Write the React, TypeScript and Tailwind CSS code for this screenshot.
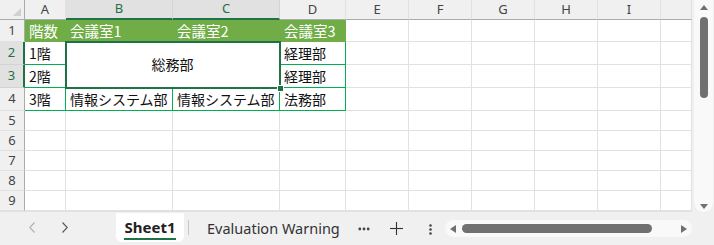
import type { ReactNode } from "react";

const ui = "font-['Noto_Sans','Liberation_Sans',sans-serif]";
const jp = "font-['Noto_Sans_CJK_JP','Noto_Sans',sans-serif]";

const letters = ["A", "B", "C", "D", "E", "F", "G", "H", "I", ""];

function Cell({ className = "", children }: { className?: string; children?: ReactNode }) {
  return (
    <div className={`box-border flex items-center overflow-hidden whitespace-nowrap border-r border-b ${className}`}>
      {children}
    </div>
  );
}

function RowHead({ n, selected = false }: { n: number; selected?: boolean }) {
  return selected ? (
    <div className={`box-border flex items-center justify-center border-b border-b-[#d4d4d4] border-r-2 border-r-[#1f7246] bg-[#e1e1e1] text-[13px] text-[#1f7246] ${ui}`}>
      {n}
    </div>
  ) : (
    <div className={`box-border flex items-center justify-center border-b border-b-[#e1e1e1] border-r border-r-[#ababab] bg-[#f0f0f0] text-[13px] text-[#444] ${ui}`}>
      {n}
    </div>
  );
}

function Grid() {
  const empty = "border-[#e1e1e1] bg-white";
  const table = `border-[#00b050] bg-white pl-[4px] text-[14px] text-[#111] ${jp}`;
  const head = `border-r-[#70ad47] border-b-[#70ad47] bg-[#70ad47] pl-[4px] text-[14.5px] text-white ${jp}`;

  return (
    <div className="grid h-[212px] w-[692px] grid-cols-[25px_41px_107px_107px_66px_63px_63px_63px_63px_63px_31px] grid-rows-[20px_22px_23px_23px_23px_20px_20px_20px_20px_20px] overflow-hidden bg-[#e1e1e1]">
      {/* column headers */}
      <div className="box-border flex items-end justify-end border-r border-b border-r-[#ababab] border-b-[#ababab] bg-[#f0f0f0] p-[3px]">
        <svg width="8" height="8" viewBox="0 0 8 8">
          <polygon points="8,0 8,8 0,8" fill="#d0d0d0" />
        </svg>
      </div>
      {letters.map((l) =>
        l === "B" || l === "C" ? (
          <div
            key={l}
            className={`box-border flex items-center justify-center border-r border-r-[#d4d4d4] border-b-2 border-b-[#1f7246] bg-[#e1e1e1] text-[13px] text-[#1f7246] ${ui}`}
          >
            {l}
          </div>
        ) : (
          <div
            key={l || "J"}
            className={`box-border flex items-center justify-center border-r border-b border-r-[#e1e1e1] border-b-[#ababab] bg-[#f0f0f0] text-[13px] text-[#444] ${ui}`}
          >
            {l}
          </div>
        ),
      )}

      {/* row 1 */}
      <RowHead n={1} />
      <Cell className={head}>階数</Cell>
      <Cell className={head}>会議室1</Cell>
      <Cell className={head}>会議室2</Cell>
      <Cell className={head}>会議室3</Cell>
      {[5, 6, 7, 8, 9, 10].map((c) => (
        <Cell key={c} className={empty} />
      ))}

      {/* row 2 */}
      <RowHead n={2} selected />
      <Cell className={table}>1階</Cell>
      <div className="relative col-span-2 row-span-2">
        <Cell className={`h-full justify-center !pl-0 ${table}`}>総務部</Cell>
        <div className="absolute -top-px -right-px -bottom-px -left-px z-10 border-2 border-[#1f7246]" />
        <div className="absolute -right-[4px] -bottom-[4px] z-20 h-[7px] w-[7px] border border-white bg-[#1f7246]" />
      </div>
      <Cell className={table}>経理部</Cell>
      {[5, 6, 7, 8, 9, 10].map((c) => (
        <Cell key={c} className={empty} />
      ))}

      {/* row 3 */}
      <RowHead n={3} selected />
      <Cell className={table}>2階</Cell>
      <Cell className={table}>経理部</Cell>
      {[5, 6, 7, 8, 9, 10].map((c) => (
        <Cell key={c} className={empty} />
      ))}

      {/* row 4 */}
      <RowHead n={4} />
      <Cell className={table}>3階</Cell>
      <Cell className={table}>情報システム部</Cell>
      <Cell className={table}>情報システム部</Cell>
      <Cell className={table}>法務部</Cell>
      {[5, 6, 7, 8, 9, 10].map((c) => (
        <Cell key={c} className={empty} />
      ))}

      {/* empty rows */}
      {[5, 6, 7, 8, 9].map((r) => (
        <div key={r} className="contents">
          <RowHead n={r} />
          {[1, 2, 3, 4, 5, 6, 7, 8, 9, 10].map((c) => (
            <Cell key={c} className={empty} />
          ))}
        </div>
      ))}
    </div>
  );
}

function VScroll() {
  return (
    <div className="flex h-[212px] w-[22px] bg-[#f0f0f0] pl-[2px]">
      <div className="flex w-[19px] flex-col items-center rounded-b-[10px] bg-[#f9f9f9] pt-[5px]">
        <svg width="8" height="5" viewBox="0 0 8 5">
          <polygon points="4,0 8,5 0,5" fill="#707070" />
        </svg>
        <div className="mt-[7px] h-[81px] w-[8px] rounded-full bg-[#707070]" />
        <div className="flex-1" />
        <svg width="8" height="5" viewBox="0 0 8 5" className="mb-[3px]">
          <polygon points="0,0 8,0 4,5" fill="#707070" />
        </svg>
      </div>
    </div>
  );
}

function TabBar() {
  return (
    <div className={`flex h-[33px] items-start ${ui}`}>
      <div className="flex h-[33px] w-[116px] items-center gap-[27px] pb-[2px] pl-[29px]">
        <svg width="6" height="11" viewBox="0 0 6 11">
          <polyline points="5.5,0.5 0.8,5.5 5.5,10.5" fill="none" stroke="#b0b0b0" strokeWidth="1.1" />
        </svg>
        <svg width="6" height="11" viewBox="0 0 6 11">
          <polyline points="0.5,0.5 5.2,5.5 0.5,10.5" fill="none" stroke="#555" strokeWidth="1.1" />
        </svg>
      </div>
      <div className="mt-px flex h-[29px] w-[68px] flex-col items-center rounded-b-[6px] bg-white pt-[5px]">
        <span className="text-[15px] leading-[18px] font-bold text-[#222]">Sheet1</span>
        <div className="mt-[2px] h-[2px] w-[52px] bg-[#1f7246]" />
      </div>
      <div className="mt-[8px] ml-[4px] h-[15px] w-px bg-[#c8c8c8]" />
      <span className="mt-[7px] ml-[18px] text-[14.5px] leading-[18px] text-[#333]">Evaluation Warning</span>
      <svg width="12" height="4" viewBox="0 0 12 4" className="mt-[15px] ml-[18px]">
        <circle cx="1.8" cy="2" r="1.4" fill="#444" />
        <circle cx="6" cy="2" r="1.4" fill="#444" />
        <circle cx="10.2" cy="2" r="1.4" fill="#444" />
      </svg>
      <svg width="13" height="13" viewBox="0 0 13 13" className="mt-[10px] ml-[20px]">
        <line x1="6.5" y1="0" x2="6.5" y2="13" stroke="#333" strokeWidth="1.1" />
        <line x1="0" y1="6.5" x2="13" y2="6.5" stroke="#333" strokeWidth="1.1" />
      </svg>
      <svg width="3" height="11" viewBox="0 0 3 11" className="mt-[12px] ml-[26px]">
        <circle cx="1.5" cy="1.5" r="1.3" fill="#444" />
        <circle cx="1.5" cy="5.5" r="1.3" fill="#444" />
        <circle cx="1.5" cy="9.5" r="1.3" fill="#444" />
      </svg>
      <div className="mt-[8px] ml-[13px] flex h-[17px] w-[247px] items-center rounded-full bg-[#f9f9f9] px-[5px]">
        <svg width="6" height="8" viewBox="0 0 6 8">
          <polygon points="6,0 6,8 0,4" fill="#707070" />
        </svg>
        <div className="ml-[6px] h-[9px] w-[190px] rounded-full bg-[#707070]" />
        <div className="flex-1" />
        <svg width="6" height="8" viewBox="0 0 6 8">
          <polygon points="0,0 6,4 0,8" fill="#707070" />
        </svg>
      </div>
    </div>
  );
}

export default function App() {
  return (
    <div className="flex h-[245px] w-[714px] flex-col overflow-hidden bg-[#f0f0f0]">
      <div className="flex">
        <Grid />
        <VScroll />
      </div>
      <TabBar />
    </div>
  );
}
